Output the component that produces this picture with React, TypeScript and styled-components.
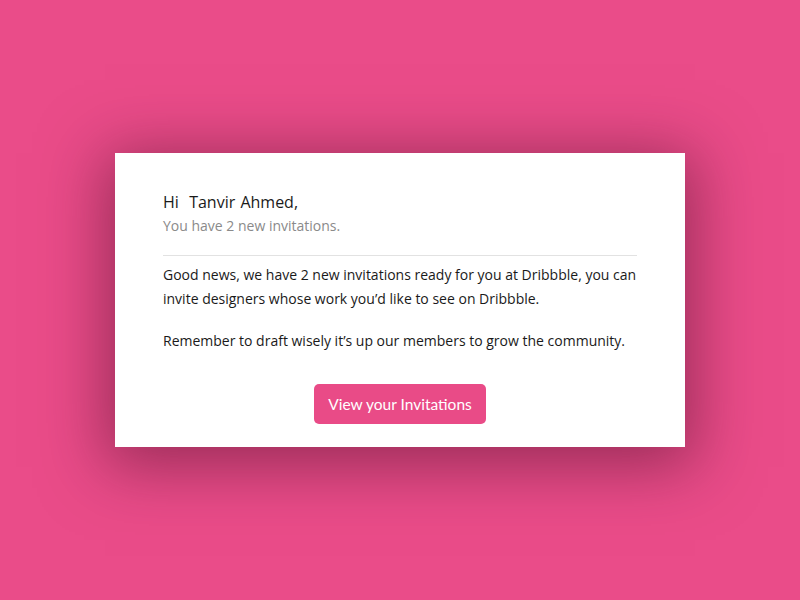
import React from "react";
import styled, { createGlobalStyle } from "styled-components";

const Global = createGlobalStyle`
  html, body { margin: 0; padding: 0; }
  body { background: #ea4c89; font-family: "Open Sans", sans-serif; }
`;

const Page = styled.div`
  width: 800px;
  height: 600px;
  background: #ea4c89;
  padding-top: 153px;
  padding-left: 115px;
  box-sizing: border-box;
`;

const Card = styled.div`
  width: 570px;
  height: 294px;
  box-sizing: border-box;
  background: #ffffff;
  padding: 38px 48px 0 48px;
  box-shadow: 0 10px 60px 10px rgba(90, 20, 50, 0.55);
  display: flex;
  flex-direction: column;
`;

const Greeting = styled.div`
  font-size: 16px;
  line-height: 22px;
  color: #1a1a1a;
  word-spacing: 1px;
`;

const Sub = styled.div`
  font-size: 14px;
  line-height: 20px;
  color: #8a8a8a;
  margin-top: 3px;
`;

const Divider = styled.hr`
  border: none;
  height: 1px;
  background: #e2e2e2;
  margin: 19px 0 0 0;
`;

const Para = styled.p<{ $top: number }>`
  margin: ${(p) => p.$top}px 0 0 0;
  font-size: 14px;
  line-height: 24px;
  color: #1a1a1a;
`;

const ButtonRow = styled.div`
  display: flex;
  justify-content: center;
  margin-top: 31px;
`;

const Button = styled.button`
  width: 172px;
  height: 40px;
  border: none;
  border-radius: 5px;
  background: #e94b87;
  color: #ffffff;
  font-family: "Lato", sans-serif;
  font-size: 15.5px;
  padding: 0;
`;

export default function App() {
  return (
    <>
      <Global />
      <Page>
        <Card>
          <Greeting>Hi&nbsp; Tanvir Ahmed,</Greeting>
          <Sub>You have 2 new invitations.</Sub>
          <Divider />
          <Para $top={7}>
            Good news, we have 2 new invitations ready for you at Dribbble, you can
            invite designers whose work you’d like to see on Dribbble.
          </Para>
          <Para $top={18}>
            Remember to draft wisely it’s up our members to grow the community.
          </Para>
          <ButtonRow>
            <Button>View your Invitations</Button>
          </ButtonRow>
        </Card>
      </Page>
    </>
  );
}
